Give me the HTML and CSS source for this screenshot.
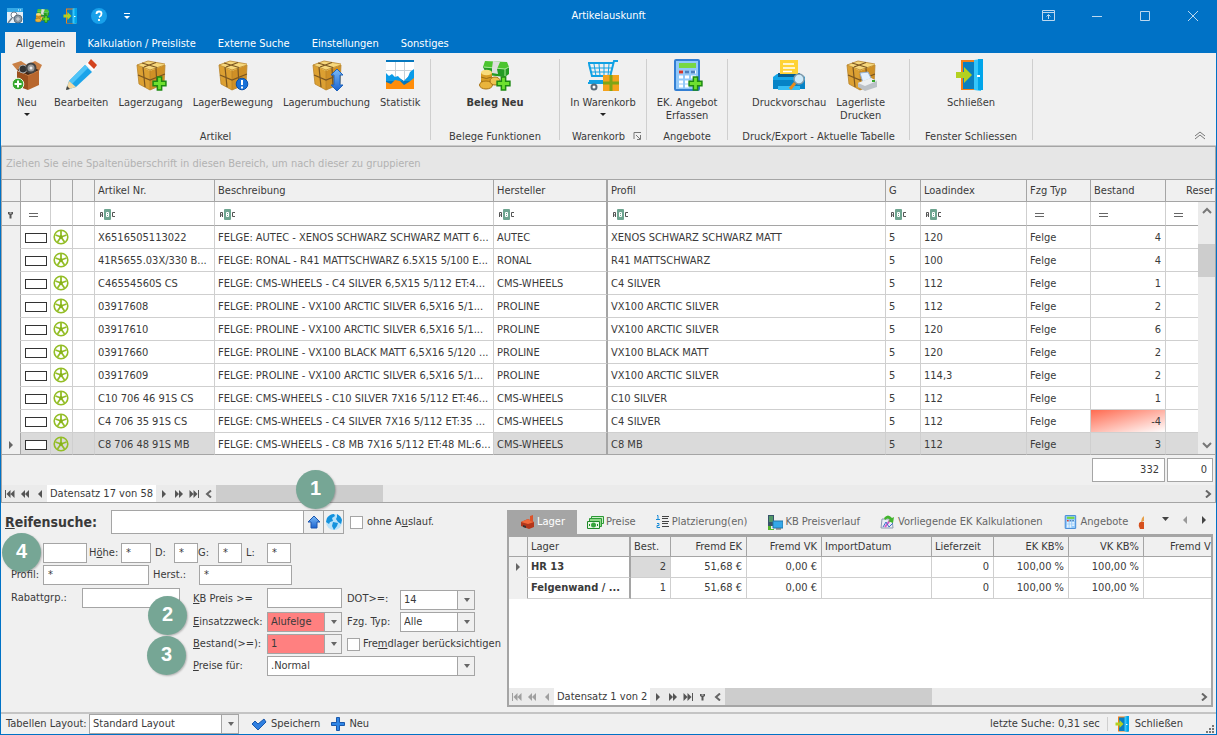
FILE: index.html
```html
<!DOCTYPE html>
<html lang="de">

<head>
    <meta charset="UTF-8">
    <meta name="viewport" content="width=device-width, initial-scale=1.0">
    <title>Artikelauskunft</title>
    <link rel="stylesheet" href="styles.css">
</head>

<body>
    <!-- Icons -->
    <svg class="defs" width="0" height="0">
        <linearGradient id="blue" x1="0" y1="0" x2="0" y2="1"><stop offset="0" stop-color="#7dbcf7"/><stop offset="1" stop-color="#1b62cf"/></linearGradient>
        <symbol id="plus" viewBox="0 0 14 14"><path d="M5 1h4v4h4v4H9v4H5V9H1V5h4z" fill="#6ee02f" stroke="#1d8a12" stroke-width="1.4"/></symbol>
        <symbol id="paket" viewBox="0 0 32 32">
            <path d="M2 6l13 5v20L4 25z" fill="#dca032"/>
            <path d="M15 11l15-5-1 19-14 6z" fill="#cf9026"/>
            <path d="M2 6l11-4 17 3v1l-15 6z" fill="#f6d77c"/>
            <path d="M2 6l13 5v20L4 25zM15 11l15-5-1 19-14 6M2 6l11-4 17 3" fill="none" stroke="#b98429" stroke-width=".8"/>
            <path d="M8 8l2 20M3 16l12 5 15-6M21 9l1 19M7 4l15 4.5M21 3.500L9 8" fill="none" stroke="#7a5520" stroke-width="1.2"/>
        </symbol>
        <symbol id="tuer" viewBox="0 0 32 32">
            <path d="M6 1h22v30H6z" fill="#f28019"/><path d="M8 3h12v27H8z" fill="#0a7fc0"/>
            <path d="M19 1l7-1v32l-7-1z" fill="#35c6fb"/><path d="M23 0h5v31h-5z" fill="#00a5ea"/>
            <path d="M22 17h3" stroke="#fff" stroke-width="2"/>
            <path d="M1 13h8V8l8 8-8 8v-5H1z" fill="#b4d121"/>
        </symbol>
        <symbol id="geld" viewBox="0 0 32 32">
            <path d="M6 2l22 1 2 5-4 2-22-2z" fill="#4cc52f"/><path d="M4 8l22 2 4-2v7l-4 3-18-2z" fill="#239b24"/>
            <path d="M5 8l21 2 4-2M26 10v7" stroke="#a7e993" fill="none"/>
            <path d="M14 2l7 1-3 7 1 5-6-1V9z" fill="#ddd"/>
            <path d="M2 14h11v12H2z" fill="#d89d25"/><ellipse cx="7.500" cy="13.500" rx="5.500" ry="2.800" fill="#f8dc7b"/>
            <path d="M2 18q5 3 11 0M2 22q5 3 11 0" stroke="#9c6d13" fill="none"/>
            <ellipse cx="7" cy="26" rx="6.500" ry="4" fill="#e9b43c" stroke="#a87314"/><ellipse cx="16" cy="22" rx="5" ry="4" fill="#f0c34f" stroke="#a87314"/>
        </symbol>
        <symbol id="rechner" viewBox="0 0 32 32">
            <rect x="5" y="1" width="24" height="30" rx="1" fill="#92c9f9" stroke="#337fd3" stroke-width="2"/>
            <rect x="9" y="4" width="17" height="5" fill="#77d743"/>
            <path d="M9 13h4M15 13h4M21 13h5M9 18h4M15 18h4M21 18h5M9 23h4M15 23h4M21 23h5M9 27h4M15 27h4" stroke="#fff" stroke-width="3"/>
            <path d="M9 13h4" stroke="#d3352a" stroke-width="3"/><path d="M15 13h11" stroke="#4d7fbd" stroke-width="3" stroke-dasharray="4 2"/>
        </symbol>
        <symbol id="felge" viewBox="0 0 16 16">
            <circle cx="8" cy="8" r="6.800" fill="none" stroke="#93bd26" stroke-width="1.600"/>
            <path d="M8 8V2M8 8l5.500-2M8 8l3.500 5M8 8l-3.500 5M8 8L2.500 6" stroke="#93bd26" stroke-width="1.800"/>
            <circle cx="8" cy="8" r="1.800" fill="#86b01b"/>
        </symbol>
        <symbol id="abc" viewBox="0 0 16 11">
            <path d="M.500 8V3.500h2V8M.500 6h2M15 3.500h-2.500v4H15" fill="none" stroke="#555"/>
            <rect x="4" width="7" height="11" rx="1" fill="#6ea590"/><path d="M6.500 3.500h2v4h-2zM6.500 5.500h2" fill="none" stroke="#fff"/>
        </symbol>
        <symbol id="gleich" viewBox="0 0 10 4"><path d="M0 .500h9M0 3.500h9" stroke="#666"/></symbol>
        <symbol id="pin" viewBox="0 0 8 8"><path d="M1 1h5v2L4.500 4v3.500h-2V4L1 3z" fill="#555"/><path d="M2.500 2h2" stroke="#eee"/></symbol>
        <symbol id="links" viewBox="0 0 10 8"><path d="M7 0v8L3 4z"/></symbol>
        <symbol id="rechts" viewBox="0 0 10 8"><path d="M3 0v8l4-4z"/></symbol>
        <symbol id="dlinks" viewBox="0 0 10 8"><path d="M5 0v8L1 4zM9 0v8L5 4z"/></symbol>
        <symbol id="drechts" viewBox="0 0 10 8"><path d="M1 0v8l4-4zM5 0v8l4-4z"/></symbol>
        <symbol id="anfang" viewBox="0 0 10 8"><path d="M0 0h1v8H0zM5.500 0v8l-4-4zM9.500 0v8l-4-4z"/></symbol>
        <symbol id="ende" viewBox="0 0 10 8"><path d="M9 0h1v8H9zM.500 0v8l4-4zM4.500 0v8l4-4z"/></symbol>
        <symbol id="winkel" viewBox="0 0 10 8"><path d="M7 .500L3 4l4 3.500" fill="none" stroke="#666" stroke-width="2"/></symbol>
        <symbol id="winkelr" viewBox="0 0 10 8"><path d="M3 .500L7 4 3 7.500" fill="none" stroke="#666" stroke-width="2"/></symbol>
    </svg>

    <header class="titlebar">
        <div class="quick">
            <button aria-label="Suche"><svg width="16" height="16"><path d="M0 1h16v14H0z" fill="#e4eff8"/><path d="M0 0h16v4H0z" fill="#35a9e6"/><path d="M11 2h1M13 2h1" stroke="#fff"/><circle cx="7" cy="7" r="3" fill="#fff" stroke="#70818f"/><path d="M5 10l-4 5" stroke="#70818f" stroke-width="1.500"/><circle cx="11" cy="11" r="4" fill="#8798a6" stroke="#5a6e7c"/><path d="M9 11h4M11 9v4" stroke="#d5dde3"/></svg></button>
            <button aria-label="Beleg neu"><svg width="16" height="16"><use href="#geld" width="15" height="15"/><use href="#plus" x="7" y="7" width="8" height="8"/></svg></button>
            <button aria-label="Schließen"><svg width="16" height="16"><use href="#tuer" width="16" height="16"/></svg></button>
            <button aria-label="Hilfe"><svg width="16" height="16"><circle cx="8" cy="8" r="8" fill="#18a0ea"/><path d="M5.500 6q0-2.500 2.500-2.500t2.500 2.300T8 9.300M8 11v2" fill="none" stroke="#fff" stroke-width="1.800"/></svg></button>
            <button aria-label="Anpassen"><svg width="16" height="16"><path d="M5 5.500h6" stroke="#fff"/><path d="M5 8h6l-3 3z" fill="#fff"/></svg></button>
        </div>
        <h1>Artikelauskunft</h1>
        <div class="win">
            <button aria-label="Menüband"><svg width="13" height="12"><path d="M.500.500h12v10H.500zM0 2.500h13M6.500 9V5M4.500 6.500l2-2 2 2" fill="none" stroke="#bcd8ef"/></svg></button>
            <button aria-label="Minimieren"><svg width="12" height="12"><path d="M1 6.500h10" stroke="#bcd8ef"/></svg></button>
            <button aria-label="Maximieren"><svg width="12" height="12"><path d="M1.500 1.500h9v9h-9z" fill="none" stroke="#bcd8ef"/></svg></button>
            <button aria-label="Fenster schließen"><svg width="12" height="12"><path d="M1 1l10 10M11 1L1 11" stroke="#bcd8ef"/></svg></button>
        </div>
    </header>

    <nav class="tabs">
        <a href="#" class="active">Allgemein</a>
        <a href="#">Kalkulation / Preisliste</a>
        <a href="#">Externe Suche</a>
        <a href="#">Einstellungen</a>
        <a href="#">Sonstiges</a>
    </nav>

    <div class="ribbon">
        <section class="group artikel">
            <div class="tools">
                <button class="neu"><svg width="32" height="32"><path d="M6 12l11 4v15L6 27z" fill="#9b4f1d"/><path d="M17 16l11-5v15l-11 5z" fill="#b8672e"/><path d="M6 11L1 5l9-3 6 4 8-4 7 4-3 6-11 5z" fill="#c98046"/><path d="M6 11l9-5 13 5-11 5z" fill="#402516"/><circle cx="12" cy="10" r="4" fill="#333" stroke="#aaa"/><circle cx="20" cy="9" r="4.500" fill="#999" stroke="#444" stroke-width="2"/><circle cx="20" cy="9" r="1.500" fill="#eee"/><circle cx="7" cy="25" r="5.800" fill="#35a72c" stroke="#e8f6e4"/><path d="M7 21.500v7M3.500 25h7" stroke="#fff" stroke-width="2"/></svg>Neu<i class="caret"></i></button>
                <button><svg width="32" height="32"><path d="M1 31l3-9 16-16 7 7-16 15z" fill="#1ba4ea"/><path d="M4 22L20 6l3 3L7 25z" fill="#50c4f7"/><path d="M1 31l3-9 7 6z" fill="#f4d8a2"/><path d="M1 31l1-4 3 3z" fill="#444"/><path d="M21 5l3-3 7 7-3 3z" fill="#fff"/><path d="M23 4l3-4 6 6-3 4z" fill="#d3431e"/></svg>Bearbeiten</button>
                <button><svg width="32" height="32"><use href="#paket"/><use href="#plus" x="17" y="17" width="15" height="15"/></svg>Lagerzugang</button>
                <button><svg width="32" height="32"><use href="#paket"/><circle cx="25" cy="25" r="5.800" fill="#1770d8" stroke="#0b4fa7"/><path d="M25 21v5M25 27.500v2" stroke="#fff" stroke-width="2"/></svg>LagerBewegung</button>
                <button><svg width="32" height="32"><use href="#paket"/><path d="M26 10l6 6h-3v10h3l-6 6-6-6h3V16h-3z" fill="url(#blue)" stroke="#1d63bd"/></svg>Lagerumbuchung</button>
                <button><svg width="28" height="32"><path d="M0 1h28v29H0z" fill="#0577be"/><path d="M0 3h28v13l-5 1-5 5-6-4-4 2-4-3H0z" fill="#fff"/><path d="M9.500 3v17M18.500 3v18M0 11.500h28" stroke="#c7d0d6"/><path d="M0 14l3 3 3-2 3 3 3-1 5 6 5-5 2-5 4-3v12H0z" fill="#0a9be8"/><path d="M0 23l5 2 4-4 5 1 4 4 5-3 5-4v11H0z" fill="#ff8d0a"/></svg>Statistik</button>
            </div>
            <h2>Artikel</h2>
        </section>
        <section class="group belege">
            <div class="tools">
                <button><svg width="32" height="32"><use href="#geld"/><use href="#plus" x="17" y="17" width="15" height="15"/></svg><b>Beleg Neu</b></button>
            </div>
            <h2>Belege Funktionen</h2>
        </section>
        <section class="group warenkorb">
            <div class="tools">
                <button><svg width="32" height="32"><path d="M31 2h-4l-5 20H2M1 4h25M2 5l3 12h19" fill="none" stroke="#11a1e4" stroke-width="2"/><path d="M7 5l2 12M12 5l1 12M17 5v12M22 5l-1 12M3 9h22M4 13h20" stroke="#11a1e4"/><path d="M1 24h17" stroke="#11a1e4" stroke-width="2"/><circle cx="7" cy="28" r="2.500" fill="#fff" stroke="#596b79" stroke-width="2"/><path d="M16 16h16v16H16z" fill="#f5a21c"/><path d="M24 16v16M16 24h16" stroke="#7fa516" stroke-width="3"/></svg>In Warenkorb<i class="caret"></i></button>
            </div>
            <h2>Warenkorb <svg width="9" height="8"><path d="M1 7V.500h7M3 3l4 4M7.500 3v4.500H4" fill="none" stroke="#777"/></svg></h2>
        </section>
        <section class="group angebote">
            <div class="tools">
                <button><svg width="32" height="32"><use href="#rechner" x="-1"/><use href="#plus" x="17" y="17" width="15" height="15"/></svg>EK. Angebot<br>Erfassen</button>
            </div>
            <h2>Angebote</h2>
        </section>
        <section class="group druck">
            <div class="tools">
                <button><svg width="32" height="32"><path d="M0 18l4-3h24l4 3v12H0z" fill="#12a5e8"/><path d="M5 14h22v4H5z" fill="#075f91"/><path d="M7 1h18v14H7z" fill="#ffd336"/><path d="M10 5h11M10 9h12M10 12.500h9" stroke="#fff" stroke-width="1.500"/><path d="M0 21h32v9H0z" fill="#0683c6"/><path d="M5 27h22v4H5z" fill="#35bdf5"/><circle cx="26" cy="20" r="5" fill="#cdeafa" stroke="#829aaa" stroke-width="1.500"/><path d="M22 24l-5 6" stroke="#e98a1b" stroke-width="3"/></svg>Druckvorschau</button>
                <button><svg width="32" height="32"><use href="#paket"/><path d="M15 14l8-1 4 8-9 3z" fill="#e3f0ff" stroke="#94b1d4"/><path d="M13 24l13-5 6 3v6l-12 4-7-4z" fill="#bbc1c7"/><path d="M13 24l13-5 6 3-12 5z" fill="#eceff1"/><path d="M27 22h3" stroke="#35a72c" stroke-width="2"/></svg>Lagerliste<br>Drucken</button>
            </div>
            <h2>Druck/Export - Aktuelle Tabelle</h2>
        </section>
        <section class="group fenster">
            <div class="tools">
                <button><svg width="32" height="32"><use href="#tuer"/></svg>Schließen</button>
            </div>
            <h2>Fenster Schliessen</h2>
        </section>
        <button class="collapse" aria-label="Menüband minimieren"><svg width="12" height="9"><path d="M1 5l5-4 5 4M1 8l5-4 5 4" fill="none" stroke="#777"/></svg></button>
    </div>

    <main>
        <p class="grouping">Ziehen Sie eine Spaltenüberschrift in diesen Bereich, um nach dieser zu gruppieren</p>
        <div class="gridwrap">
            <table class="grid">
                <colgroup>
                    <col class="w19"><col class="w30"><col class="w22"><col class="w22"><col class="w120"><col class="w279"><col class="w114"><col><col class="w35"><col class="w106"><col class="w64"><col class="w75"><col class="w49">
                </colgroup>
                <thead>
                    <tr><th></th><th></th><th></th><th></th><th>Artikel Nr.</th><th>Beschreibung</th><th>Hersteller</th><th>Profil</th><th>G</th><th>Loadindex</th><th>Fzg Typ</th><th>Bestand</th><th class="reser">Reser</th></tr>
                    <tr class="filter">
                        <td><svg width="8" height="8"><use href="#pin"/></svg></td>
                        <td class="eq"><svg width="10" height="4"><use href="#gleich"/></svg></td>
                        <td></td>
                        <td></td>
                        <td><svg width="16" height="11"><use href="#abc"/></svg></td>
                        <td><svg width="16" height="11"><use href="#abc"/></svg></td>
                        <td><svg width="16" height="11"><use href="#abc"/></svg></td>
                        <td><svg width="16" height="11"><use href="#abc"/></svg></td>
                        <td><svg width="16" height="11"><use href="#abc"/></svg></td>
                        <td><svg width="16" height="11"><use href="#abc"/></svg></td>
                        <td class="eq"><svg width="10" height="4"><use href="#gleich"/></svg></td>
                        <td class="eq"><svg width="10" height="4"><use href="#gleich"/></svg></td>
                        <td class="eq"><svg width="10" height="4"><use href="#gleich"/></svg></td>
                    </tr>
                </thead>
                <tbody>
                    <tr><td></td><td><i class="box"></i></td><td><svg width="16" height="16"><use href="#felge"/></svg></td><td></td><td>X6516505113022</td><td>FELGE: AUTEC - XENOS SCHWARZ SCHWARZ MATT 6...</td><td>AUTEC</td><td>XENOS SCHWARZ SCHWARZ MATT</td><td>5</td><td>120</td><td>Felge</td><td class="num">4</td><td></td></tr>
                    <tr><td></td><td><i class="box"></i></td><td><svg width="16" height="16"><use href="#felge"/></svg></td><td></td><td>41R5655.03X/330 B...</td><td>FELGE: RONAL - R41 MATTSCHWARZ 6.5X15 5/100 E...</td><td>RONAL</td><td>R41 MATTSCHWARZ</td><td>5</td><td>100</td><td>Felge</td><td class="num">4</td><td></td></tr>
                    <tr><td></td><td><i class="box"></i></td><td><svg width="16" height="16"><use href="#felge"/></svg></td><td></td><td>C46554560S CS</td><td>FELGE: CMS-WHEELS - C4 SILVER 6,5X15 5/112 ET:4...</td><td>CMS-WHEELS</td><td>C4 SILVER</td><td>5</td><td>112</td><td>Felge</td><td class="num">1</td><td></td></tr>
                    <tr><td></td><td><i class="box"></i></td><td><svg width="16" height="16"><use href="#felge"/></svg></td><td></td><td>03917608</td><td>FELGE: PROLINE - VX100 ARCTIC SILVER 6,5X16 5/1...</td><td>PROLINE</td><td>VX100 ARCTIC SILVER</td><td>5</td><td>112</td><td>Felge</td><td class="num">2</td><td></td></tr>
                    <tr><td></td><td><i class="box"></i></td><td><svg width="16" height="16"><use href="#felge"/></svg></td><td></td><td>03917610</td><td>FELGE: PROLINE - VX100 ARCTIC SILVER 6,5X16 5/1...</td><td>PROLINE</td><td>VX100 ARCTIC SILVER</td><td>5</td><td>120</td><td>Felge</td><td class="num">6</td><td></td></tr>
                    <tr><td></td><td><i class="box"></i></td><td><svg width="16" height="16"><use href="#felge"/></svg></td><td></td><td>03917660</td><td>FELGE: PROLINE - VX100 BLACK MATT 6,5X16 5/120 ...</td><td>PROLINE</td><td>VX100 BLACK MATT</td><td>5</td><td>120</td><td>Felge</td><td class="num">2</td><td></td></tr>
                    <tr><td></td><td><i class="box"></i></td><td><svg width="16" height="16"><use href="#felge"/></svg></td><td></td><td>03917609</td><td>FELGE: PROLINE - VX100 ARCTIC SILVER 6,5X16 5/1...</td><td>PROLINE</td><td>VX100 ARCTIC SILVER</td><td>5</td><td>114,3</td><td>Felge</td><td class="num">2</td><td></td></tr>
                    <tr><td></td><td><i class="box"></i></td><td><svg width="16" height="16"><use href="#felge"/></svg></td><td></td><td>C10 706 46 91S CS</td><td>FELGE: CMS-WHEELS - C10 SILVER 7X16 5/112 ET:46...</td><td>CMS-WHEELS</td><td>C10 SILVER</td><td>5</td><td>112</td><td>Felge</td><td class="num">1</td><td></td></tr>
                    <tr><td></td><td><i class="box"></i></td><td><svg width="16" height="16"><use href="#felge"/></svg></td><td></td><td>C4 706 35 91S CS</td><td>FELGE: CMS-WHEELS - C4 SILVER 7X16 5/112 ET:35 ...</td><td>CMS-WHEELS</td><td>C4 SILVER</td><td>5</td><td>112</td><td>Felge</td><td class="num minus">-4</td><td></td></tr>
                    <tr class="current"><td><svg width="10" height="8"><use href="#rechts"/></svg></td><td><i class="box"></i></td><td><svg width="16" height="16"><use href="#felge"/></svg></td><td></td><td>C8 706 48 91S MB</td><td class="focus">FELGE: CMS-WHEELS - C8 MB 7X16 5/112 ET:48 ML:6...</td><td>CMS-WHEELS</td><td>C8 MB</td><td>5</td><td>112</td><td>Felge</td><td class="num">3</td><td></td></tr>
                </tbody>
            </table>
            <div class="vscroll">
                <svg width="10" height="8"><path d="M1 7l4-4 4 4" fill="none" stroke="#777" stroke-width="2"/></svg>
                <i></i>
                <svg width="10" height="8"><path d="M1 1l4 4 4-4" fill="none" stroke="#777" stroke-width="2"/></svg>
            </div>
        </div>
        <div class="sums"><output>332</output><output class="small">0</output></div>
        <div class="navigator">
            <button aria-label="Erster"><svg width="10" height="8"><use href="#anfang"/></svg></button>
            <button aria-label="Vorherige Seite"><svg width="10" height="8"><use href="#dlinks"/></svg></button>
            <button aria-label="Vorheriger"><svg width="10" height="8"><use href="#links"/></svg></button>
            <span class="record">Datensatz 17 von 58</span>
            <button aria-label="Nächster"><svg width="10" height="8"><use href="#rechts"/></svg></button>
            <button aria-label="Nächste Seite"><svg width="10" height="8"><use href="#drechts"/></svg></button>
            <button aria-label="Letzter"><svg width="10" height="8"><use href="#ende"/></svg></button>
            <button aria-label="Nach links"><svg width="10" height="8"><use href="#winkel"/></svg></button>
            <div class="hscroll"><i class="t17"></i></div>
            <button aria-label="Nach rechts"><svg width="10" height="8"><use href="#winkelr"/></svg></button>
        </div>
    </main>

    <div class="lower">
        <form class="search">
            <div class="line big">
                <label class="title" for="suche"><u>R</u>eifensuche:</label>
                <input type="text" id="suche">
                <button type="button" aria-label="Suchen"><svg width="14" height="14"><path d="M7 1l6 6h-3v6H4V7H1z" fill="url(#blue)" stroke="#1c55ae"/></svg></button>
                <button type="button" aria-label="Websuche"><svg width="18" height="18"><circle cx="9" cy="9" r="8" fill="#b9e2fa"/><path d="M2 5q3-4 7-4l1 2-3 2 1 3-3 1-1 2-3-2zM8 9l5 1-1 3-3 4-2-4zM12 1q4 2 5 6l-1 4-3-2-2-3 1-2z" fill="#1492dd"/></svg></button>
                <input type="checkbox" id="auslauf"><label for="auslauf">ohne A<u>u</u>slauf.</label>
            </div>
            <div class="line breite">
                <input type="text" class="s44" aria-label="Breite">
                <label class="l34" for="hoehe">H<u>ö</u>he:</label><input type="text" class="s30" id="hoehe" value="*">
                <label class="l23" for="d">D:</label><input type="text" class="s24" id="d" value="*">
                <label class="l20" for="g">G:</label><input type="text" class="s24" id="g" value="*">
                <label class="l25" for="l">L:</label><input type="text" class="s24" id="l" value="*">
            </div>
            <div class="line profil">
                <label class="l41" for="profil">Profil:</label><input type="text" class="s106" id="profil" value="*">
                <label class="l50" for="herst">Herst.:</label><input type="text" class="s93" id="herst" value="*">
            </div>
            <div class="split">
                <div class="line rabatt">
                    <label class="l80" for="rabatt">Rabattgrp.:</label><input type="text" class="s98" id="rabatt">
                </div>
                <div class="fields">
                    <label for="kb"><u>K</u>B Preis &gt;=</label>
                    <input type="text" id="kb">
                    <label for="dot">DOT&gt;=:</label>
                    <span class="combo low"><select id="dot"><option>14</option></select></span>
                    <label for="zweck"><u>E</u>insatzzweck:</label>
                    <span class="combo red"><select id="zweck"><option>Alufelge</option></select></span>
                    <label for="typ">Fzg. Typ:</label>
                    <span class="combo"><select id="typ"><option>Alle</option></select></span>
                    <label for="bestand"><u>B</u>estand(&gt;=):</label>
                    <span class="combo red"><select id="bestand"><option>1</option></select></span>
                    <span class="check"><input type="checkbox" id="fremd"><label for="fremd">Fre<u>m</u>dlager berücksichtigen</label></span>
                    <label for="preise"><u>P</u>reise für:</label>
                    <span class="combo wide"><select id="preise"><option>.Normal</option></select></span>
                </div>
            </div>
        </form>

        <section class="detail">
            <div class="dtabs">
                <button class="on"><svg width="16" height="16"><path d="M2 8l7-3 6 3v5l-5 2-8-3z" fill="#b3361b"/><path d="M2 8l7-3 6 3-6 2z" fill="#f16a3b"/><path d="M11 7V2l3-1v7z" fill="#dc532b"/><path d="M4 11l3 1v2l-3-1z" fill="#333"/></svg>Lager</button>
                <button><svg width="17" height="16"><path d="M4.500 2.500h12v7h-12z" fill="#c9efc6" stroke="#2d9a36"/><path d="M2.500 4.500h12v8h-12z" fill="#8dd886" stroke="#2d9a36"/><path d="M.500 7.500h12v7H.500z" fill="#e9f8e6" stroke="#1f8a29"/><circle cx="6.500" cy="11" r="2.500" fill="#37a53d"/><path d="M2.500 10v2M10.500 10v2" stroke="#1f8a29"/></svg>Preise</button>
                <button><svg width="14" height="16"><path d="M6 2.500h7M6 4.500h6M6 7.500h7M6 9.500h6M6 12.500h7" stroke="#444"/><path d="M1 1.500h1V5M0 5.500h4M1 9.500h2v2H1v2h3" fill="none" stroke="#168bd7"/></svg>Platzierung(en)</button>
                <button><svg width="16" height="16"><path d="M1 1h6v11H1z" fill="#37536b"/><path d="M2 3h4M2 5h4M2 7h4" stroke="#6bdc62"/><path d="M6 7h10v7H6z" fill="#35a8e9" stroke="#2276aa"/><path d="M9 15h5" stroke="#555"/><path d="M1 12h3v3h3v1H1z" fill="#54b62c"/></svg>KB Preisverlauf</button>
                <button><svg width="16" height="16"><path d="M2 5h10l1 9H1z" fill="#e9eef5" stroke="#8b98af"/><path d="M5 13l6-8" stroke="#d65bc8" stroke-width="2"/><path d="M4 4q4-5 8 0l2-1-1 6-5-2 2-1q-2-3-5 0z" fill="#43b52f"/><path d="M3 13l3-5 3 5 4-4" fill="none" stroke="#3f70c9"/></svg>Vorliegende EK Kalkulationen</button>
                <button><svg width="16" height="16"><use href="#rechner" y="1" width="14" height="14"/></svg>Angebote</button>
                <button class="cut" aria-label="Weitere"><svg width="6" height="16"><path d="M4 4l2-2v5l-3 1z" fill="#e6a04b"/><path d="M1 9q2-2 5-1v7H2q-2-3-1-6z" fill="#d6501d"/></svg></button>
                <span class="tabnav"><svg width="10" height="8"><path d="M1 1h7L4.500 5z"/></svg><svg class="dim" width="10" height="8"><use href="#links"/></svg><svg width="10" height="8"><use href="#rechts"/></svg></span>
            </div>
            <div class="panel">
                <table class="stock">
                    <colgroup>
                        <col class="w19"><col class="w103"><col class="w40"><col class="w76"><col class="w75"><col><col class="w62"><col class="w75"><col class="w75"><col class="w67">
                    </colgroup>
                    <thead>
                        <tr><th></th><th>Lager</th><th>Best.</th><th class="num">Fremd EK</th><th class="num">Fremd VK</th><th>ImportDatum</th><th>Lieferzeit</th><th class="num">EK KB%</th><th class="num">VK KB%</th><th class="fremdv">Fremd V</th></tr>
                    </thead>
                    <tbody>
                        <tr><td><svg width="10" height="8"><use href="#rechts"/></svg></td><td><b>HR 13</b></td><td class="num sel">2</td><td class="num">51,68 €</td><td class="num">0,00 €</td><td></td><td class="num">0</td><td class="num">100,00 %</td><td class="num">100,00 %</td><td></td></tr>
                        <tr><td></td><td><b>Felgenwand / ...</b></td><td class="num">1</td><td class="num">51,68 €</td><td class="num">0,00 €</td><td></td><td class="num">0</td><td class="num">100,00 %</td><td class="num">100,00 %</td><td></td></tr>
                    </tbody>
                </table>
                <div class="navigator">
                    <button class="dim" aria-label="Erster"><svg width="10" height="8"><use href="#anfang"/></svg></button>
                    <button class="dim" aria-label="Vorherige Seite"><svg width="10" height="8"><use href="#dlinks"/></svg></button>
                    <button class="dim" aria-label="Vorheriger"><svg width="10" height="8"><use href="#links"/></svg></button>
                    <span class="record">Datensatz 1 von 2</span>
                    <button aria-label="Nächster"><svg width="10" height="8"><use href="#rechts"/></svg></button>
                    <button aria-label="Nächste Seite"><svg width="10" height="8"><use href="#drechts"/></svg></button>
                    <button aria-label="Letzter"><svg width="10" height="8"><use href="#ende"/></svg></button>
                    <button aria-label="Filter"><svg width="8" height="8"><use href="#pin"/></svg></button>
                    <button aria-label="Nach links"><svg width="10" height="8"><use href="#winkel"/></svg></button>
                    <div class="hscroll"><i class="t44"></i></div>
                    <button aria-label="Nach rechts"><svg width="10" height="8"><use href="#winkelr"/></svg></button>
                </div>
            </div>
        </section>
    </div>

    <footer class="status">
        <label for="layout">Tabellen Layout:</label>
        <span class="combo"><select id="layout"><option>Standard Layout</option></select></span>
        <button><svg width="16" height="14"><path d="M1 7l3-3 3 3 6-5 2 3-8 8z" fill="#2f7fe0" stroke="#1a58ab"/></svg>Speichern</button>
        <button><svg width="14" height="14"><path d="M5.500 .500h3v5h5v3h-5v5h-3v-5h-5v-3h5z" fill="#2f86e6" stroke="#1a58ab"/></svg>Neu</button>
        <span class="time">letzte Suche: 0,31 sec</span>
        <button class="close"><svg width="16" height="16"><use href="#tuer" width="16" height="16"/></svg>Schließen</button>
        <svg class="grip" width="9" height="9"><path d="M7 1h2M4 4h2M7 4h2M1 7h2M4 7h2M7 7h2" stroke="#777" stroke-width="2"/></svg>
    </footer>

    <span class="badge b1">1</span>
    <span class="badge b2">2</span>
    <span class="badge b3">3</span>
    <span class="badge b4">4</span>
</body>

</html>
```
FILE: styles.css
```css
* {
    box-sizing: border-box;
}

body {
    margin: 0;
    height: 100vh;
    display: flex;
    flex-direction: column;
    position: relative;
    overflow: hidden;
    border: 1px solid #0072c6;
    border-top: 0;
    background: #f0f0f0;
    color: #3a3a3a;
    font: 11px/14px "DejaVu Sans Condensed", Tahoma, sans-serif;
    white-space: nowrap;
}

button,
input,
select {
    font: inherit;
    color: inherit;
    margin: 0;
    padding: 0;
    border: 0;
    border-radius: 0;
    background: none;
}

svg {
    display: block;
    flex: none;
}

.defs {
    position: absolute;
}

h1,
h2,
p {
    margin: 0;
    font-size: 11px;
    font-weight: normal;
}

/* Titelleiste */
.titlebar {
    height: 32px;
    flex: none;
    background: #0072c6;
    color: #fff;
    display: grid;
    grid-template-columns: 1fr auto 1fr;
    align-items: center;
}

.quick {
    display: flex;
    gap: 12px;
    padding-left: 6px;
}

.win {
    display: flex;
    justify-content: flex-end;
    gap: 36px;
    padding-right: 17px;
}

.tabs {
    height: 21px;
    flex: none;
    display: flex;
    padding-left: 4px;
    background: #0072c6;
}

.tabs a {
    padding: 5px 11px 2px;
    color: #fff;
    text-decoration: none;
}

.tabs a.active {
    background: #f0f0f0;
    color: #3a3a3a;
}

/* Ribbon */
.ribbon {
    height: 94px;
    flex: none;
    display: flex;
    padding-top: 6px;
    border-bottom: 1px solid #a5a5a5;
    box-shadow: inset 0 -1px #cacaca;
}

.group {
    height: 81px;
    display: flex;
    flex-direction: column;
    justify-content: space-between;
    border-right: 1px solid #cfcfcf;
}

.tools {
    display: flex;
    justify-content: center;
    align-items: flex-start;
}

.tools button {
    display: flex;
    flex-direction: column;
    align-items: center;
    padding: 0 5px;
    line-height: 13px;
}

.tools .neu {
    min-width: 44px;
}

.tools svg {
    margin-bottom: 5px;
}

.group h2 {
    display: flex;
    justify-content: center;
    align-items: center;
    gap: 8px;
    line-height: 13px;
    height: 8px;
}

.caret {
    margin-top: 4px;
    border: 3px solid transparent;
    border-top: 3px solid #222;
}

.artikel { width: 430px; }
.artikel .tools { justify-content: flex-start; padding-left: 4px; }
.belege { width: 129px; }
.warenkorb { width: 87px; }
.warenkorb h2 { padding-left: 8px; }
.angebote { width: 81px; }
.druck { width: 182px; }
.fenster { width: 123px; }

.collapse {
    margin: auto 10px 6px auto;
}

/* Artikeltabelle */
main {
    flex: none;
    border: solid #a5a5a5;
    border-width: 0 1px 1px;
}

.grouping {
    height: 32px;
    padding: 10px 4px;
    background: #e6e6e6;
    color: #b2b2b2;
}

.gridwrap {
    position: relative;
    border-top: 1px solid #a5a5a5;
}

table {
    width: 100%;
    table-layout: fixed;
    border-collapse: separate;
    border-spacing: 0;
    background: #fff;
}

th,
td {
    padding: 0 0 0 3px;
    overflow: hidden;
    text-align: left;
    font-weight: normal;
    line-height: 14px;
    border-right: 1px solid #cfcfcf;
    border-bottom: 1px solid #cfcfcf;
}

th {
    height: 22px;
    background: #f0f0f0;
    border-color: #a5a5a5;
}

th:last-child,
td:last-child {
    border-right: 0;
}

td {
    padding-top: 2px;
    fill: #666;
}

td:first-child {
    background: #f0f0f0;
    border-right-color: #a5a5a5;
    border-bottom-color: #f0f0f0;
}

td:first-child svg {
    margin: auto;
}

.grid td {
    height: 23px;
}

.grid td:first-child {
    padding-left: 0;
}

.grid td:nth-child(3) {
    padding: 0 0 0 2px;
}

.grid .filter td {
    height: 24px;
    padding-left: 5px;
    border-bottom-color: #a5a5a5;
}

.grid .filter td:first-child {
    padding-left: 0;
}

.grid .filter td.eq {
    padding-left: 8px;
}

.grid th:nth-child(7),
.grid td:nth-child(7),
.stock th:nth-child(2),
.stock td:nth-child(2) {
    border-right: 2px solid #a5a5a5;
}

.grid .reser {
    padding-left: 20px;
}

.grid .num {
    text-align: right;
    padding-right: 4px;
}

.grid .minus {
    background: linear-gradient(165deg, #ff6a50, #fff);
}

.grid .current td {
    height: 22px;
    background: #dadada;
    border-bottom-color: #a5a5a5;
}

.grid .current td:first-child {
    background: #f0f0f0;
}

.grid .current .focus {
    background: #fff;
}

.box {
    display: block;
    width: 22px;
    height: 10px;
    margin-left: 1px;
    border: 1px solid #333;
    background: #fff;
}

.w19 { width: 19px; }
.w22 { width: 22px; }
.w30 { width: 30px; }
.w35 { width: 35px; }
.w40 { width: 40px; }
.w49 { width: 49px; }
.w62 { width: 62px; }
.w64 { width: 64px; }
.w67 { width: 67px; }
.w75 { width: 75px; }
.w76 { width: 76px; }
.w103 { width: 103px; }
.w106 { width: 106px; }
.w114 { width: 114px; }
.w120 { width: 120px; }
.w279 { width: 279px; }

.vscroll {
    position: absolute;
    top: 22px;
    right: 0;
    bottom: 1px;
    width: 17px;
    padding: 4px 0;
    display: flex;
    flex-direction: column;
    align-items: center;
    background: #ebebeb;
}

.vscroll i {
    width: 100%;
    height: 33px;
    margin: 30px 0 auto;
    background: #cdcdcd;
}

.sums {
    display: flex;
    justify-content: flex-end;
    gap: 2px;
    padding: 3px 2px;
    height: 30px;
}

.sums output {
    width: 73px;
    padding: 4px 5px;
    border: 1px solid #a5a5a5;
    background: #fff;
    text-align: right;
}

.sums .small {
    width: 46px;
}

.navigator {
    height: 17px;
    display: flex;
    background: #ebebeb;
    fill: #555;
}

.navigator button {
    width: 15px;
    display: flex;
    align-items: center;
    justify-content: center;
}

.dim {
    opacity: .5;
}

.record {
    padding: 2px 3px 0;
    background: #fff;
}

.hscroll {
    flex: 1;
}

.hscroll i {
    display: block;
    height: 100%;
    background: #cdcdcd;
}

.t17 { width: 17%; }
.t44 { width: 44%; }

/* Suchformular */
.lower {
    flex: 1;
    display: flex;
    min-height: 0;
    padding: 7px 3px 5px 1px;
    border-bottom: 2px solid #c4c4c4;
}

.search {
    flex: none;
    width: 505px;
}

.line {
    display: flex;
    align-items: center;
}

.search input[type="text"] {
    height: 20px;
    padding: 0 4px 2px;
    border: 1px solid #a5a5a5;
    background: #fff;
}

.search .big {
    height: 24px;
}

.search .big input[type="text"] {
    width: 193px;
    height: 24px;
}

.title {
    width: 109px;
    padding-left: 3px;
    font-size: 14px;
    font-weight: bold;
}

.big button {
    width: 20px;
    height: 24px;
    display: flex;
    align-items: center;
    justify-content: center;
    border: 1px solid #a5a5a5;
    border-left: 0;
}

input[type="checkbox"] {
    appearance: none;
    flex: none;
    width: 13px;
    height: 13px;
    border: 1px solid #a5a5a5;
    background: #fff;
}

.big input[type="checkbox"] {
    margin: 0 4px 0 6px;
}

.breite {
    margin-top: 9px;
    padding-left: 41px;
}

.profil {
    margin-top: 2px;
}

.line label + input {
    flex: none;
}

.l20 { width: 20px; }
.l23 { width: 23px; padding-left: 4px; }
.l25 { width: 25px; padding-left: 4px; }
.l34 { width: 34px; padding-left: 2px; }
.l41 { width: 41px; padding-left: 9px; }
.l50 { width: 50px; padding-left: 4px; }
.l80 { width: 80px; padding-left: 9px; }
.s24 { width: 24px; }
.s30 { width: 30px; }
.s44 { width: 44px; }
.s93 { width: 93px; }
.s98 { width: 98px; }
.s106 { width: 106px; }

.split {
    display: flex;
    margin-top: 3px;
}

.rabatt {
    width: 191px;
    height: 20px;
}

.fields {
    display: grid;
    grid-template-columns: 74px 80px 53px 75px;
    grid-template-rows: 22px 20px 20px 20px;
    gap: 2px 0;
    align-items: center;
}

#kb {
    width: 75px;
    align-self: start;
}

.combo {
    position: relative;
    display: block;
    width: 75px;
    height: 20px;
}

.combo.low {
    align-self: end;
}

.combo.wide {
    grid-column: span 3;
    width: 208px;
}

.combo select {
    appearance: none;
    width: 100%;
    height: 100%;
    padding: 0 18px 0 3px;
    border: 1px solid #a5a5a5;
    background: #fff;
}

.combo.red select {
    background: #ff8080;
}

.combo::before {
    content: "";
    position: absolute;
    top: 1px;
    right: 1px;
    bottom: 1px;
    width: 16px;
    background: #f0f0f0;
    border-left: 1px solid #a5a5a5;
    pointer-events: none;
}

.combo::after {
    content: "";
    position: absolute;
    top: 8px;
    right: 5px;
    border: 3px solid transparent;
    border-top: 4px solid #666;
    border-bottom: 0;
    pointer-events: none;
}

.check {
    grid-column: span 2;
    display: flex;
    align-items: center;
    gap: 3px;
}

/* Lager */
.detail {
    flex: 1;
    min-width: 0;
    display: flex;
    flex-direction: column;
}

.dtabs {
    height: 24px;
    flex: none;
    display: flex;
    color: #666;
}

.dtabs button {
    display: flex;
    align-items: center;
    gap: 2px;
    padding: 0 10px;
}

.dtabs .on {
    padding: 0 12px;
    background: #a5a5a5;
    color: #fff;
}

.dtabs .cut {
    padding: 0;
}

.tabnav {
    display: flex;
    align-items: center;
    gap: 9px;
    margin: 0 4px 4px auto;
    fill: #444;
}

.panel {
    flex: 1;
    display: flex;
    flex-direction: column;
    justify-content: space-between;
    border: 2px solid #a5a5a5;
    border-top-width: 3px;
    background: #fff;
}

.stock th {
    height: 20px;
}

.stock td {
    height: 21px;
    padding-top: 0;
}

.stock td:first-child {
    padding-left: 0;
}

.stock .num {
    text-align: right;
    padding: 0 4px 0 0;
}

.stock .sel {
    background: #dadada;
}

.stock .fremdv {
    padding-left: 26px;
}

/* Statusleiste */
.status {
    height: 20px;
    flex: none;
    display: flex;
    align-items: center;
    padding-left: 5px;
}

.status label {
    width: 83px;
}

.status .combo {
    width: 150px;
    margin-right: 12px;
}

.status button {
    display: flex;
    align-items: center;
    gap: 4px;
    margin-right: 11px;
}

.status .time {
    margin-left: auto;
    padding-right: 7px;
    border-right: 1px solid #cfcfcf;
}

.status .close {
    margin: 0 22px 0 7px;
}

.grip {
    align-self: flex-end;
    margin-right: 2px;
}

/* Markierungen */
.badge {
    position: absolute;
    width: 39px;
    height: 39px;
    border-radius: 50%;
    background: #76a695;
    box-shadow: 1px 1px 2px rgba(0, 0, 0, .25);
    color: #fff;
    font: bold 20px/37px "Liberation Sans", Arial, sans-serif;
    text-align: center;
}

.b1 { left: 295px; top: 470px; }
.b2 { left: 147px; top: 596px; }
.b3 { left: 146px; top: 636px; }
.b4 { left: 1px; top: 533px; }
```
